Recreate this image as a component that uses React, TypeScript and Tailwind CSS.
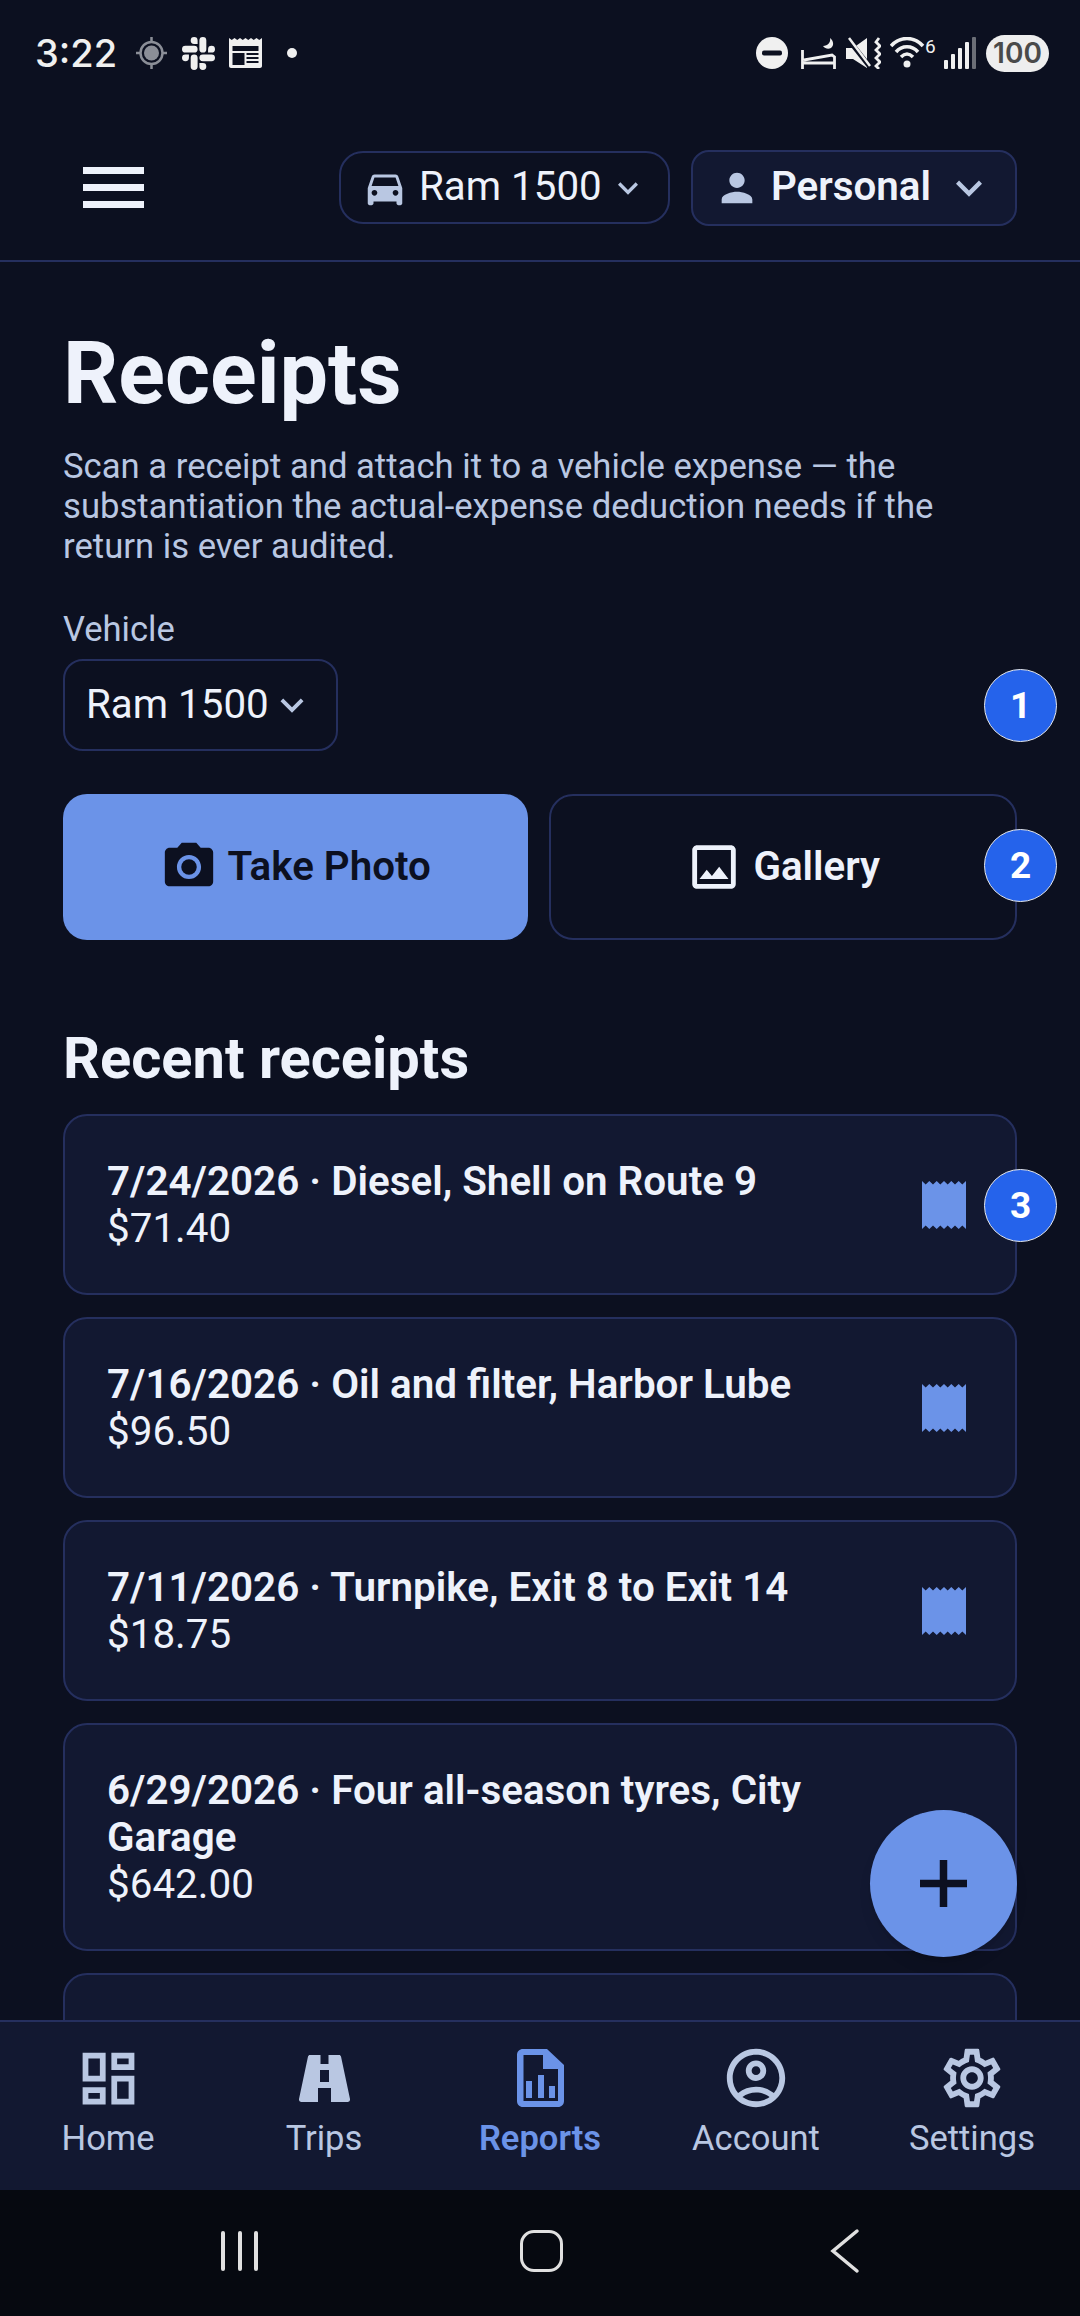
import React from "react";
import {
  MdDirectionsCar,
  MdPerson,
  MdPhotoCamera,
  MdOutlineImage,
  MdOutlineAccountCircle,
  MdOutlineSettings,
  MdOutlineDashboard,
  MdKeyboardArrowDown,
} from "react-icons/md";
import { SiSlack } from "react-icons/si";

function Badge({ n, className }: { n: number; className: string }) {
  return (
    <div
      className={
        "absolute left-[984px] w-[73px] h-[73px] rounded-full bg-[#2563eb] border border-[#e5e7eb] flex items-center justify-center text-white text-[37px] font-bold " +
        className
      }
    >
      {n}
    </div>
  );
}

function ReceiptIcon() {
  return (
    <svg width="44" height="48" viewBox="0 0 44 48" className="shrink-0">
      <path
        d="M0 0l3.700 3.500L7.300 0l3.700 3.500L14.700 0l3.600 3.500L22 0l3.700 3.500L29.300 0l3.700 3.500L36.700 0l3.600 3.500L44 0v48l-3.700-3.500L36.700 48 33 44.500 29.300 48l-3.600-3.500L22 48l-3.700-3.500L14.700 48 11 44.500 7.300 48l-3.600-3.500L0 48z"
        fill="#6b93e8"
      />
    </svg>
  );
}

function ReceiptCard({ title, amount }: { title: string; amount: string }) {
  return (
    <div className="shrink-0 rounded-[24px] border-2 border-[#252f5e] bg-[#121831] pl-[42px] pr-[49px] py-[41.5px] flex items-center justify-between">
      <div className="flex-1 pr-[32px]">
        <div className="text-[#eef2fb] text-[40.4px] leading-[47px] font-semibold">{title}</div>
        <div className="text-[#eef2fb] text-[40.4px] leading-[47px]">{amount}</div>
      </div>
      <ReceiptIcon />
    </div>
  );
}

function TripsIcon() {
  return (
    <svg width="51" height="47" viewBox="0 0 51 47">
      <path
        fillRule="evenodd"
        d="M11 0h10.500v9h8V0H40c1 0 1.700.6 2 1.500L51 44c.3 1.700-.8 3-2.500 3H32V33H19v14H2.500C.8 47-.3 45.700 0 44L9 1.500C9.300.6 10 0 11 0zM21 15v12h9V15z"
        fill="#b9c7e2"
      />
    </svg>
  );
}

function ReportsIcon() {
  return (
    <svg width="47" height="58" viewBox="0 0 47 58">
      <path
        fillRule="evenodd"
        d="M6 0h24l17 16v36c0 3.500-2.500 6-6 6H6c-3.500 0-6-2.500-6-6V6c0-3.500 2.500-6 6-6zM6.500 6v46h34.500V20H26V6z"
        fill="#6b93e8"
      />
      <rect x="9" y="32" width="6" height="17" fill="#6b93e8" />
      <rect x="21" y="26" width="6" height="23" fill="#6b93e8" />
      <rect x="32" y="37" width="6" height="12" fill="#6b93e8" />
    </svg>
  );
}

function NavItem({ label, icon, active }: { label: string; icon: React.ReactNode; active?: boolean }) {
  return (
    <div className={"flex-1 flex flex-col items-center " + (active ? "text-[#6b93e8] font-semibold" : "text-[#b9c7e2]")}>
      <div className="h-[60px] flex items-center justify-center">{icon}</div>
      <div className="text-[34.56px] leading-[42px] mt-[9px]">{label}</div>
    </div>
  );
}

function StatusBar() {
  return (
    <div className="h-[106px] shrink-0 flex items-center justify-between pl-[35px] pr-[31px] text-[#f0f0f0]">
      <div className="flex items-center">
        <span className="text-[38px] font-medium w-[101px]" style={{ fontFamily: "Inter, Roboto, sans-serif" }}>3:22</span>
        <svg width="31" height="32" viewBox="0 0 31 32">
          <circle cx="15.500" cy="16" r="11" fill="none" stroke="#8b8e97" strokeWidth="2.500" />
          <circle cx="15.500" cy="16" r="7.500" fill="#8b8e97" />
          <path d="M15.500 0v5M15.500 27v5M0 16h5M26 16h5" stroke="#8b8e97" strokeWidth="2.500" />
        </svg>
        <SiSlack size={33} className="ml-[15px]" />
        <svg width="33" height="30" viewBox="0 0 33 30" className="ml-[14px]">
          <path
            d="M0 0l2.750 2L5.500 0l2.750 2L11 0l2.750 2L16.500 0l2.750 2L22 0l2.750 2L27.500 0l2.750 2L33 0v28c0 1-1 2-2 2H2c-1 0-2-1-2-2z"
            fill="#f0f0f0"
          />
          <rect x="3.500" y="8" width="26" height="5" fill="#0c1020" />
          <rect x="3.500" y="15" width="12" height="12" fill="#0c1020" />
          <rect x="17.500" y="15" width="12" height="2" fill="#0c1020" />
          <rect x="17.500" y="19" width="12" height="2" fill="#0c1020" />
          <rect x="17.500" y="23" width="12" height="2" fill="#0c1020" />
        </svg>
        <div className="w-[10px] h-[10px] rounded-full bg-[#f0f0f0] ml-[25px]" />
      </div>
      <div className="flex items-center">
        <svg width="32" height="32" viewBox="0 0 32 32">
          <circle cx="16" cy="16" r="16" fill="#f0f0f0" />
          <rect x="6" y="13.500" width="20" height="5" rx="2" fill="#0c1020" />
        </svg>
        <svg width="35" height="31" viewBox="0 0 35 31" className="ml-[13px]">
          <path d="M1.500 12v19M33.500 31v-6H1.500M3 22l28-5 2.500 2v6" fill="none" stroke="#f0f0f0" strokeWidth="2.800" />
          <path d="M29 0c1 4-2 8-7 8 2 2.500 5 3.500 8 2 3-2 3-7-1-10z" fill="#f0f0f0" />
        </svg>
        <svg width="35" height="32" viewBox="0 0 35 32" className="ml-[10px]">
          <path d="M0 11h7L21 1v30L7 22H0z" fill="#f0f0f0" />
          <path d="M2 2l22 28" stroke="#0c1020" strokeWidth="5" />
          <path d="M3 1l21 28" stroke="#f0f0f0" strokeWidth="2.500" />
          <path d="M33 1l-3 4 4 4-4 4 4 4-4 4 4 4-4 4 3 3" fill="none" stroke="#f0f0f0" strokeWidth="2.800" />
        </svg>
        <div className="ml-[9px] w-[46px] h-[32px] flex items-start">
          <svg width="35" height="32" viewBox="0 0 35 32" className="shrink-0">
            <path d="M1 9C10-1 24-1 33 9M6 15c6-7 16-7 22 0M11 20c4-4 8-4 12 0" fill="none" stroke="#f0f0f0" strokeWidth="3.500" />
            <circle cx="17" cy="27" r="3.500" fill="#f0f0f0" />
          </svg>
          <span className="text-[19px] leading-[19px]">6</span>
        </div>
        <div className="flex items-end gap-[3px] h-[32px] ml-[8px]">
          <div className="w-[4px] h-[9px] bg-[#f0f0f0] rounded-[1px]" />
          <div className="w-[4px] h-[15px] bg-[#f0f0f0] rounded-[1px]" />
          <div className="w-[4px] h-[21px] bg-[#f0f0f0] rounded-[1px]" />
          <div className="w-[4px] h-[27px] bg-[#f0f0f0] rounded-[1px]" />
          <div className="w-[4px] h-[32px] bg-[#6b6e76] rounded-[1px]" />
        </div>
        <div
          className="ml-[10px] w-[63px] h-[37px] rounded-full bg-[#eeeeee] text-[#4a4a4a] text-[28px] font-semibold flex items-center justify-center"
          style={{ fontFamily: "Inter, Roboto, sans-serif" }}
        >
          100
        </div>
      </div>
    </div>
  );
}

export default function App() {
  return (
    <div
      className="relative w-[1080px] h-[2316px] overflow-hidden bg-[#0c1020] flex flex-col"
      style={{ fontFamily: "Roboto, sans-serif" }}
    >
      <StatusBar />

      <header className="h-[156px] shrink-0 border-b-2 border-[#252f5e] flex items-center pl-[83px] pr-[63px] pt-[9px]">
        <div className="flex flex-col gap-[10px] w-[61px]">
          <div className="h-[7px] bg-[#eef2fb]" />
          <div className="h-[7px] bg-[#eef2fb]" />
          <div className="h-[7px] bg-[#eef2fb]" />
        </div>
        <div className="ml-auto flex items-center gap-[21px]">
          <div className="h-[73px] w-[331px] rounded-[24px] border-2 border-[#252f5e] flex items-center pl-[21px] text-[#eef2fb]">
            <MdDirectionsCar size={46} className="text-[#b9c7e2]" />
            <span className="text-[40.32px] ml-[11px]">Ram 1500</span>
            <MdKeyboardArrowDown size={40} className="text-[#b9c7e2] ml-[6px]" />
          </div>
          <div className="h-[76px] w-[326px] rounded-[18px] border-2 border-[#252f5e] bg-[#121831] flex items-center pl-[21px] text-[#eef2fb]">
            <MdPerson size={46} className="text-[#b9c7e2]" />
            <span className="text-[40.32px] font-semibold ml-[11px]">Personal</span>
            <MdKeyboardArrowDown size={52} className="text-[#b9c7e2] ml-[12px]" />
          </div>
        </div>
      </header>

      <main className="flex-1 min-h-0 overflow-hidden pl-[63px] pr-[63px] pt-[62px] flex flex-col">
        <h1 className="shrink-0 text-[86.4px] leading-[100px] font-bold text-[#eef2fb]">Receipts</h1>
        <p className="shrink-0 mt-[22px] text-[34.67px] leading-[40px] text-[#b9c7e2]">
          Scan a receipt and attach it to a vehicle expense — the substantiation the actual-expense deduction needs if the return is ever audited.
        </p>
        <div className="shrink-0 mt-[43px] text-[34.56px] leading-[40px] text-[#b9c7e2]">Vehicle</div>
        <div className="shrink-0 mt-[10px] h-[92px] w-[275px] rounded-[20px] border-2 border-[#252f5e] flex items-center pl-[21px] text-[#eef2fb]">
          <span className="text-[40.32px]">Ram 1500</span>
          <MdKeyboardArrowDown size={46} className="text-[#b9c7e2]" />
        </div>
        <div className="shrink-0 mt-[43px] flex gap-[21px] h-[146px]">
          <div className="flex-1 rounded-[24px] bg-[#6b93e8] flex items-center justify-center text-[#0c1020]">
            <MdPhotoCamera size={58} />
            <span className="text-[40.32px] font-semibold ml-[10px]">Take Photo</span>
          </div>
          <div className="flex-1 rounded-[24px] border-2 border-[#252f5e] flex items-center justify-center text-[#eef2fb]">
            <MdOutlineImage size={58} />
            <span className="text-[40.32px] font-semibold ml-[10px]">Gallery</span>
          </div>
        </div>
        <h2 className="shrink-0 mt-[83px] text-[57.8px] leading-[70px] font-bold text-[#eef2fb]">Recent receipts</h2>
        <div className="shrink-0 mt-[21px] flex flex-col gap-[22px]">
          <ReceiptCard title="7/24/2026 · Diesel, Shell on Route 9" amount="$71.40" />
          <ReceiptCard title="7/16/2026 · Oil and filter, Harbor Lube" amount="$96.50" />
          <ReceiptCard title="7/11/2026 · Turnpike, Exit 8 to Exit 14" amount="$18.75" />
          <ReceiptCard title="6/29/2026 · Four all-season tyres, City Garage" amount="$642.00" />
          <div className="shrink-0 h-[181px] rounded-[24px] border-2 border-[#252f5e] bg-[#121831]" />
        </div>
      </main>

      <nav className="h-[170px] shrink-0 border-t-2 border-[#252f5e] bg-[#121831] flex pt-[26px]">
        <NavItem label="Home" icon={<MdOutlineDashboard size={69} />} />
        <NavItem label="Trips" icon={<TripsIcon />} />
        <NavItem label="Reports" icon={<ReportsIcon />} active />
        <NavItem label="Account" icon={<MdOutlineAccountCircle size={70} />} />
        <NavItem label="Settings" icon={<MdOutlineSettings size={70} />} />
      </nav>

      <div className="h-[126px] shrink-0 bg-[#060910] flex items-center pl-[221px] pb-[4px]">
        <div className="flex gap-[12.500px]">
          <div className="w-[4px] h-[40px] bg-[#e0e0e0] rounded-full" />
          <div className="w-[4px] h-[40px] bg-[#e0e0e0] rounded-full" />
          <div className="w-[4px] h-[40px] bg-[#e0e0e0] rounded-full" />
        </div>
        <div className="ml-[262px] w-[43px] h-[42px] rounded-[14px] border-[3px] border-[#e0e0e0]" />
        <svg className="ml-[263px]" width="34" height="46" viewBox="0 0 34 46">
          <path d="M31 3L7 23l24 20" fill="none" stroke="#e0e0e0" strokeWidth="3.500" strokeLinecap="round" />
        </svg>
      </div>

      <Badge n={1} className="top-[669px]" />
      <Badge n={2} className="top-[829px]" />
      <Badge n={3} className="top-[1169px]" />

      <div className="absolute left-[870px] top-[1810px] w-[147px] h-[147px] rounded-full bg-[#6b93e8] flex items-center justify-center shadow-lg">
        <svg width="47" height="47" viewBox="0 0 47 47">
          <path d="M23.500 0v47M0 23.500h47" stroke="#0c1020" strokeWidth="7.500" />
        </svg>
      </div>
    </div>
  );
}
